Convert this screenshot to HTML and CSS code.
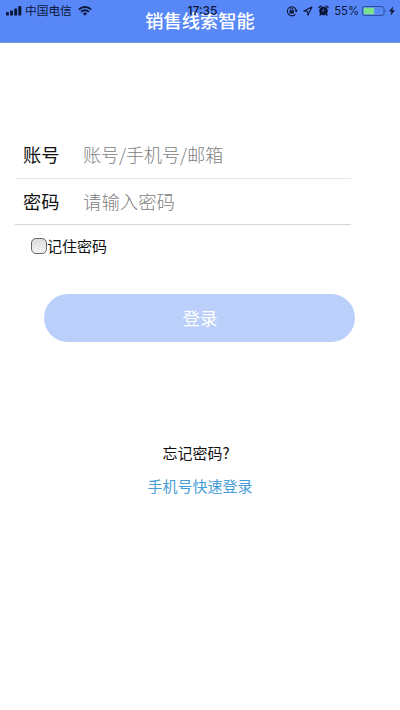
FILE: index.html
```html
<!DOCTYPE html>
<html lang="zh-CN">
<head>
<meta charset="utf-8">
<title>销售线索智能</title>
<link rel="stylesheet" href="styles.css">
</head>
<body>
<header class="header">
  <h1 class="title">销售线索智能</h1>
  <div class="status">
    <div class="status-left">
      <svg class="signal" width="16" height="10" viewBox="0 0 16 10"><rect x="0" y="6" width="2.9" height="3.6" rx=".7"/><rect x="4.1" y="4.5" width="2.9" height="5.1" rx=".7"/><rect x="8.2" y="2.5" width="2.9" height="7.1" rx=".7"/><rect x="12.3" y="0" width="3" height="9.6" rx=".7"/></svg>
      <span class="carrier">中国电信</span>
      <svg class="wifi" width="14" height="10" viewBox="0 0 14 10"><path d="M.9 3.6a8.6 8.6 0 0 1 12.2 0M3.1 5.9a5.5 5.5 0 0 1 7.8 0" fill="none" stroke="currentColor" stroke-width="1.9"/><path d="M4.8 7.6a3.1 3.1 0 0 1 4.4 0L7 9.8z"/></svg>
    </div>
    <span class="time">17:35</span>
    <div class="status-right">
      <svg width="12" height="12" viewBox="0 0 12 12"><path d="M9.4 9.1A4.5 4.5 0 1 1 10.2 5.2" fill="none" stroke="currentColor" stroke-width="1.1"/><path d="M8.6 5h3.2l-1.6 2.4z"/><rect x="3.5" y="5.2" width="4.4" height="3.2" rx=".4"/><path d="M4.5 5.3V4.2a1.2 1.2 0 0 1 2.4 0v1.1" fill="none" stroke="currentColor" stroke-width=".9"/></svg>
      <svg class="location" width="10" height="10" viewBox="0 0 10 10"><path d="M8.9 1.1.9 5l3.7.4.3 3.8z" fill="none" stroke="currentColor" stroke-width="1.1" stroke-linejoin="round"/></svg>
      <svg class="alarm" width="11" height="11" viewBox="0 0 11 11"><circle cx="5.5" cy="5.9" r="4.3"/><path d="M.9 2.5 2.8 1M8.2 1l1.9 1.5M2.8 9 2 10.2M8.2 9l.8 1.2" stroke="currentColor" stroke-width="1.3" stroke-linecap="round"/><path d="M5.6 3.8v2.3H4" fill="none" stroke="#5a8af7" stroke-width=".7"/></svg>
      <span class="percent">55%</span>
      <svg class="battery" width="25" height="10" viewBox="0 0 25 10"><rect x=".5" y=".5" width="21.5" height="9" rx="2" fill="none" stroke="#2f4f9c"/><rect x="1.8" y="1.8" width="10.4" height="6.4" rx=".6" fill="#7be08d"/><path d="M23.4 3.4q1.3 1.6 0 3.2z" fill="#2f4f9c"/></svg>
      <svg class="bolt" width="6" height="10" viewBox="0 0 6 10"><path d="M4.1.4 0 5.6h2.3L1.7 9.6 6 4.2H3.5z"/></svg>
    </div>
  </div>
</header>
<main>
  <form class="form">
    <div class="row">
      <label class="label" for="account">账号</label>
      <input class="input" id="account" type="text" placeholder="账号/手机号/邮箱">
    </div>
    <div class="row row-last">
      <label class="label" for="password">密码</label>
      <input class="input input-password" id="password" type="password" placeholder="请输入密码">
    </div>
    <label class="remember"><input class="check" type="checkbox"><span class="remember-text">记住密码</span></label>
    <button class="login" type="button">登录</button>
  </form>
  <nav class="links">
    <a class="forgot">忘记密码?</a>
    <a class="quick">手机号快速登录</a>
  </nav>
</main>
</body>
</html>
```

FILE: styles.css
```css
* { box-sizing: border-box; }
body {
  margin: 0;
  height: 710px;
  overflow: hidden;
  background: #fff;
  color: #111;
  font-family: "Liberation Sans", "Noto Sans CJK SC", sans-serif;
}
svg { display: block; flex: none; fill: currentColor; }
.header {
  position: relative;
  height: 43px;
  background: #5888f7;
  border-bottom: 1px solid #7394d4;
}
.title {
  margin: 0;
  padding-top: 8px;
  color: #fff;
  font-size: 18.3px;
  line-height: 27px;
  font-weight: 500;
  text-align: center;
}
.status {
  position: absolute;
  inset: 0 0 auto;
  height: 20px;
  display: grid;
  grid-template-columns: 1fr auto 1fr;
  align-items: center;
  padding: 0 5px 0 6px;
  color: #0b1737;
}
.status-left, .status-right { display: flex; align-items: center; }
.status-right { justify-content: flex-end; }
.carrier { margin-left: 3px; font-size: 11.7px; line-height: 20px; }
.wifi { margin-left: 6px; }
.time {
  padding: 1px 0 0 4px;
  font: 500 12px/20px Inter, sans-serif;
}
.location { margin-left: 5px; }
.alarm { margin-left: 5px; }
.percent { margin-left: 5px; font: 400 11.3px/20px Inter, sans-serif; }
.battery { margin-left: 3px; }
.bolt { margin-left: 2px; }

.form { padding: 89px 0 0 15px; }
.row {
  display: flex;
  align-items: center;
  width: 336px;
  height: 47px;
  padding-left: 8px;
  border-bottom: 1px solid #e6e6e6;
}
.row-last { height: 46px; border-color: #d6d6d6; }
.label { width: 60px; padding-top: 2px; font-size: 18.2px; line-height: 28px; }
.input {
  flex: 1;
  min-width: 0;
  height: 32px;
  padding: 0 0 2px;
  border: 0;
  outline: 0;
  background: transparent;
  font: 300 18px/28px "Noto Sans CJK SC", sans-serif;
}
.input-password { font-size: 18.4px; }
.input::placeholder { color: #808080; opacity: 1; }
.remember {
  display: flex;
  align-items: center;
  height: 22px;
  margin: 10px 0 0 16px;
  font-size: 15px;
}
.remember-text { line-height: 20px; padding-top: 1px; }
.check {
  appearance: none;
  width: 16px;
  height: 16px;
  margin: 0;
  border: 1px solid #666;
  border-radius: 5px;
  background: linear-gradient(#dcdcdc, #f4f4f4);
}
.login {
  display: block;
  width: 311px;
  height: 48px;
  margin: 37px 0 0 29px;
  padding: 0 0 0 1px;
  border: 0;
  border-radius: 24px;
  background: #bacff9;
  color: #fff;
  font: 400 17.5px/48px "Noto Sans CJK SC", sans-serif;
}
.links {
  display: flex;
  flex-direction: column;
  align-items: center;
  padding-top: 100px;
  font-size: 15px;
  line-height: 22px;
}
.forgot { margin-left: -8px; font-family: "Noto Sans CJK SC", sans-serif; }
.quick { margin-top: 12px; color: #479dd5; }
```
